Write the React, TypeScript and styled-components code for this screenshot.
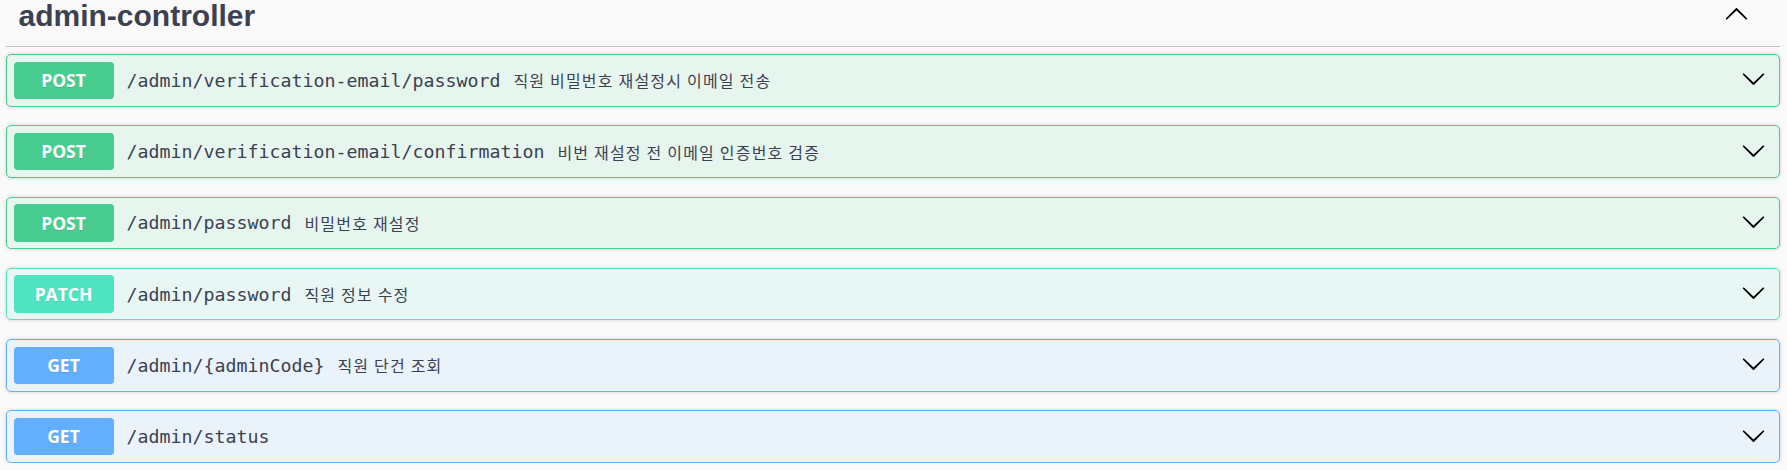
import React from "react";
import styled, { createGlobalStyle } from "styled-components";

const GlobalStyle = createGlobalStyle`
  html, body {
    margin: 0;
    padding: 0;
    background: #fafafa;
  }
  body {
    font-family: "Liberation Sans", "Noto Sans CJK KR", sans-serif;
    color: #3b4151;
  }
`;

type Method = "post" | "patch" | "get";

const palette: Record<Method, { main: string; tint: string }> = {
  post: { main: "#49cc90", tint: "rgba(73, 204, 144, 0.1)" },
  patch: { main: "#50e3c2", tint: "rgba(80, 227, 194, 0.1)" },
  get: { main: "#61affe", tint: "rgba(97, 175, 254, 0.1)" },
};

const Wrapper = styled.div`
  padding: 0 7px 0 6px;
`;

const TagHeader = styled.div`
  display: flex;
  align-items: flex-start;
  justify-content: space-between;
  height: 46px;
  padding: 0 31px 0 12.5px;
  margin-bottom: 7px;
  border-bottom: 1px solid rgba(59, 65, 81, 0.3);
`;

const TagTitle = styled.h3`
  margin: 1px 0 0;
  font-family: "Liberation Sans", "Noto Sans CJK KR", sans-serif;
  font-size: 30px;
  line-height: 30px;
  font-weight: 700;
  color: #3b4151;
`;

const ToggleIcon = styled.svg<{ $up?: boolean }>`
  display: block;
  width: 25px;
  height: 25px;
  fill: #000;
  margin-top: ${(p) => (p.$up ? "1.5px" : "0")};
  transform: ${(p) => (p.$up ? "rotate(180deg)" : "none")};
`;

const OpList = styled.div`
  display: flex;
  flex-direction: column;
  gap: 18.75px;
`;

const OpBlock = styled.div<{ $method: Method }>`
  display: flex;
  align-items: center;
  padding: 6.5px;
  border: 1px solid ${(p) => palette[p.$method].main};
  border-radius: 5px;
  background: ${(p) => palette[p.$method].tint};
  box-shadow: 0 0 3.75px rgba(0, 0, 0, 0.19);
`;

const MethodBadge = styled.span<{ $method: Method }>`
  box-sizing: border-box;
  min-width: 100px;
  padding: 7.5px 0;
  border-radius: 3.75px;
  background: ${(p) => palette[p.$method].main};
  color: #fff;
  font-family: "Open Sans", "Liberation Sans", sans-serif;
  font-size: 17.5px;
  line-height: 22.5px;
  font-weight: 700;
  text-align: center;
  text-shadow: 0 1.25px 0 rgba(0, 0, 0, 0.1);
`;

const OpPath = styled.span`
  padding: 0 13px;
  font-family: "DejaVu Sans Mono", "Liberation Mono", monospace;
  font-size: 18.27px;
  color: #3b4151;
  white-space: nowrap;
`;

const OpDescription = styled.span`
  flex: 1 1 auto;
  font-family: "Noto Sans CJK KR", "Noto Sans", sans-serif;
  font-size: 16px;
  letter-spacing: 1.2px;
  color: #3b4151;
`;

const ArrowSlot = styled.div`
  margin-left: auto;
  padding-right: 7px;
  margin-bottom: 3px;
`;

const Arrow: React.FC<{ up?: boolean }> = ({ up }) => (
  <ToggleIcon $up={up} viewBox="0 0 20 20" aria-hidden="true">
    <path d="M17.418 6.109c.272-.268.709-.268.979 0s.271.701 0 .969l-7.908 7.83c-.27.268-.707.268-.979 0l-7.908-7.830c-.27-.268-.27-.701 0-.969.271-.268.709-.268.979 0L10 13.25l7.418-7.141z" />
  </ToggleIcon>
);

const operations: { method: Method; path: string; summary?: string }[] = [
  { method: "post", path: "/admin/verification-email/password", summary: "직원 비밀번호 재설정시 이메일 전송" },
  { method: "post", path: "/admin/verification-email/confirmation", summary: "비번 재설정 전 이메일 인증번호 검증" },
  { method: "post", path: "/admin/password", summary: "비밀번호 재설정" },
  { method: "patch", path: "/admin/password", summary: "직원 정보 수정" },
  { method: "get", path: "/admin/{adminCode}", summary: "직원 단건 조회" },
  { method: "get", path: "/admin/status" },
];

export default function App(): JSX.Element {
  return (
    <>
      <GlobalStyle />
      <Wrapper>
        <TagHeader>
          <TagTitle>admin-controller</TagTitle>
          <Arrow up />
        </TagHeader>
        <OpList>
          {operations.map((op, i) => (
            <OpBlock key={i} $method={op.method}>
              <MethodBadge $method={op.method}>{op.method.toUpperCase()}</MethodBadge>
              <OpPath>{op.path}</OpPath>
              {op.summary && <OpDescription>{op.summary}</OpDescription>}
              <ArrowSlot>
                <Arrow />
              </ArrowSlot>
            </OpBlock>
          ))}
        </OpList>
      </Wrapper>
    </>
  );
}
